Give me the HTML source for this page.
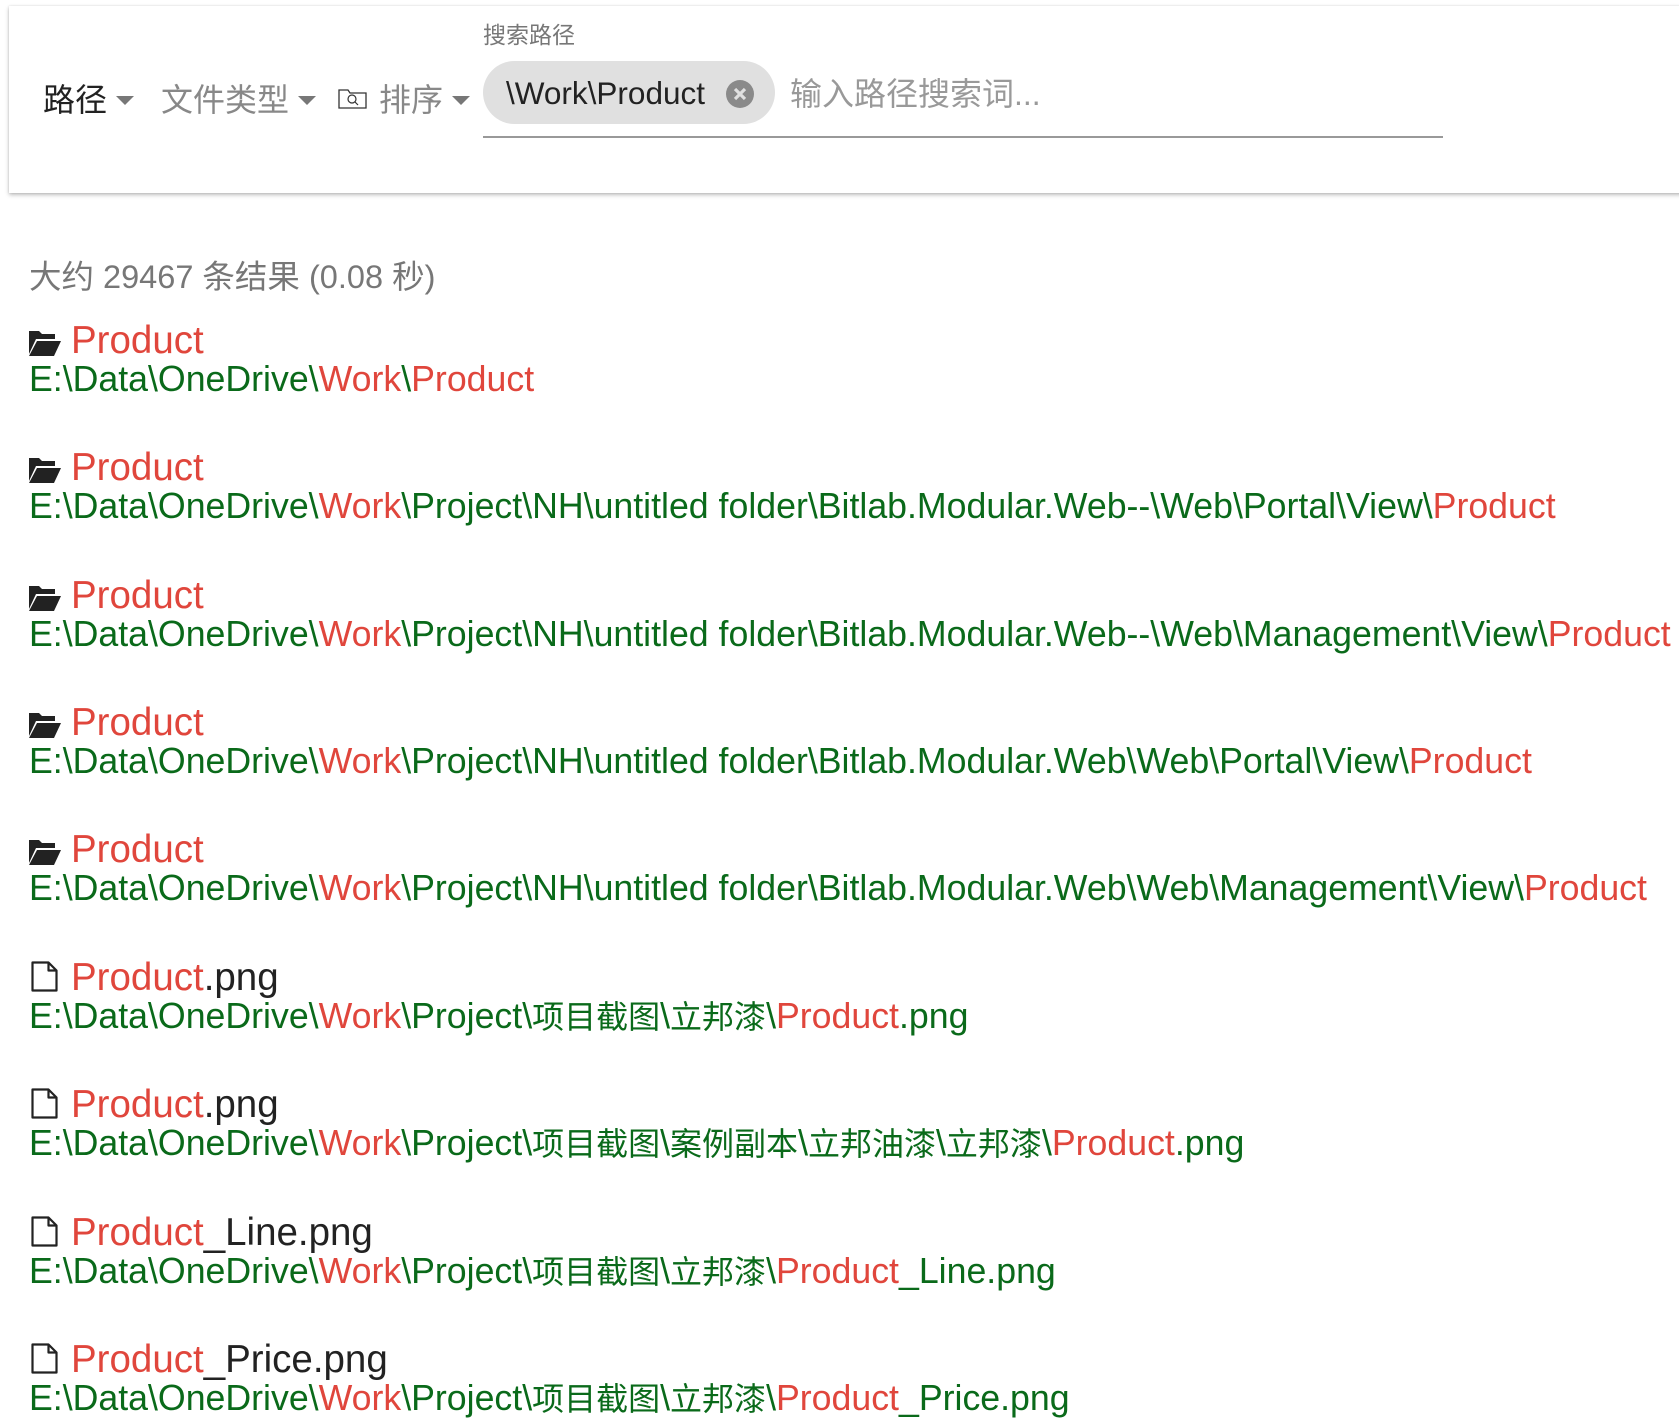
<!DOCTYPE html>
<html><head><meta charset="utf-8"><style>
body{margin:0;width:1679px;height:1427px;overflow:hidden;background:#fff;font-family:"Liberation Sans","Noto Sans CJK SC",sans-serif;position:relative}
.card{position:absolute;left:9px;top:6px;width:1700px;height:187px;background:#fff;box-shadow:0 2px 4px rgba(0,0,0,.25),0 0 2px rgba(0,0,0,.12)}
.a{position:absolute;white-space:nowrap}
.car{position:absolute;width:0;height:0;border-left:9px solid transparent;border-right:9px solid transparent;border-top:9px solid #777}
.t{font-size:38.5px;line-height:40px;color:#222}
.p{font-size:35.7px;line-height:40px;color:#0a6a1a}
.r{color:#e0463c}
.c{font-size:32px}
</style></head><body>
<div class="card"></div>
<div class="a" style="left:483px;top:20px;font-size:23px;color:#777;line-height:30px">搜索路径</div>
<div class="a" style="left:43px;top:82px;font-size:32px;line-height:36px;color:#222">路径</div>
<div class="car" style="left:116px;top:96px"></div>
<div class="a" style="left:161px;top:82px;font-size:32px;line-height:36px;color:#888">文件类型</div>
<div class="car" style="left:298px;top:96px"></div>
<svg class="a" style="left:338px;top:87px" width="29" height="22" viewBox="0 0 29 22"><path d="M1 3h9l2 3h16v15H1z" fill="none" stroke="#333" stroke-width="1.3"/><circle cx="14" cy="12" r="4" fill="none" stroke="#333" stroke-width="1.2"/><path d="M17 15l3 3" stroke="#333" stroke-width="1.2"/></svg>
<div class="a" style="left:379px;top:82px;font-size:32px;line-height:36px;color:#888">排序</div>
<div class="car" style="left:452px;top:96px"></div>
<div class="a" style="left:483px;top:61px;width:292px;height:63px;border-radius:32px;background:#e0e0e0"></div>
<div class="a" style="left:506px;top:76px;font-size:31.5px;line-height:34px;color:#222">\Work\Product</div>
<svg class="a" style="left:726px;top:80px" width="28" height="28" viewBox="0 0 28 28"><circle cx="14" cy="14" r="14" fill="#8a8a8a"/><path d="M9 9l10 10M19 9L9 19" stroke="#e0e0e0" stroke-width="3.2"/></svg>
<div class="a" style="left:790px;top:76px;font-size:32px;line-height:36px;color:#999">输入路径搜索词...</div>
<div class="a" style="left:483px;top:136px;width:960px;height:2px;background:#999"></div>
<div class="a" style="left:29px;top:259px;font-size:32.5px;line-height:36px;color:#777">大约 29467 条结果 (0.08 秒)</div>

<svg width="0" height="0" style="position:absolute"><defs>
<symbol id="fo" viewBox="0 0 32 27"><path d="M0 2h10l3 3h13v5H7L0 25z M8 12h24l-7 15H0z" fill="#222"/></symbol>
<symbol id="fi" viewBox="0 0 27 31"><path d="M1.5 1.5h16l8 8v20h-24z M17.5 1.5v8h8" fill="none" stroke="#222" stroke-width="2.2" stroke-linejoin="round"/></symbol>
</defs></svg>

<svg class="a" style="left:29px;top:329px" width="32" height="27"><use href="#fo"/></svg>
<div class="a t r" style="left:71px;top:321px">Product</div>
<div class="a p" style="left:29px;top:359px">E:\Data\OneDrive\<span class="r">Work</span>\<span class="r">Product</span></div>

<svg class="a" style="left:29px;top:456px" width="32" height="27"><use href="#fo"/></svg>
<div class="a t r" style="left:71px;top:448px">Product</div>
<div class="a p" style="left:29px;top:486px">E:\Data\OneDrive\<span class="r">Work</span>\Project\NH\untitled folder\Bitlab.Modular.Web--\Web\Portal\View\<span class="r">Product</span></div>

<svg class="a" style="left:29px;top:584px" width="32" height="27"><use href="#fo"/></svg>
<div class="a t r" style="left:71px;top:576px">Product</div>
<div class="a p" style="left:29px;top:614px">E:\Data\OneDrive\<span class="r">Work</span>\Project\NH\untitled folder\Bitlab.Modular.Web--\Web\Management\View\<span class="r">Product</span></div>

<svg class="a" style="left:29px;top:711px" width="32" height="27"><use href="#fo"/></svg>
<div class="a t r" style="left:71px;top:703px">Product</div>
<div class="a p" style="left:29px;top:741px">E:\Data\OneDrive\<span class="r">Work</span>\Project\NH\untitled folder\Bitlab.Modular.Web\Web\Portal\View\<span class="r">Product</span></div>

<svg class="a" style="left:29px;top:838px" width="32" height="27"><use href="#fo"/></svg>
<div class="a t r" style="left:71px;top:830px">Product</div>
<div class="a p" style="left:29px;top:868px">E:\Data\OneDrive\<span class="r">Work</span>\Project\NH\untitled folder\Bitlab.Modular.Web\Web\Management\View\<span class="r">Product</span></div>

<svg class="a" style="left:31px;top:961px" width="27" height="31"><use href="#fi"/></svg>
<div class="a t" style="left:71px;top:958px"><span class="r">Product</span>.png</div>
<div class="a p" style="left:29px;top:996px">E:\Data\OneDrive\<span class="r">Work</span>\Project\<span class="c">项目截图</span>\<span class="c">立邦漆</span>\<span class="r">Product</span>.png</div>

<svg class="a" style="left:31px;top:1088px" width="27" height="31"><use href="#fi"/></svg>
<div class="a t" style="left:71px;top:1085px"><span class="r">Product</span>.png</div>
<div class="a p" style="left:29px;top:1123px">E:\Data\OneDrive\<span class="r">Work</span>\Project\<span class="c">项目截图</span>\<span class="c">案例副本</span>\<span class="c">立邦油漆</span>\<span class="c">立邦漆</span>\<span class="r">Product</span>.png</div>

<svg class="a" style="left:31px;top:1216px" width="27" height="31"><use href="#fi"/></svg>
<div class="a t" style="left:71px;top:1213px"><span class="r">Product</span>_Line.png</div>
<div class="a p" style="left:29px;top:1251px">E:\Data\OneDrive\<span class="r">Work</span>\Project\<span class="c">项目截图</span>\<span class="c">立邦漆</span>\<span class="r">Product</span>_Line.png</div>

<svg class="a" style="left:31px;top:1343px" width="27" height="31"><use href="#fi"/></svg>
<div class="a t" style="left:71px;top:1340px"><span class="r">Product</span>_Price.png</div>
<div class="a p" style="left:29px;top:1378px">E:\Data\OneDrive\<span class="r">Work</span>\Project\<span class="c">项目截图</span>\<span class="c">立邦漆</span>\<span class="r">Product</span>_Price.png</div>
</body></html>
